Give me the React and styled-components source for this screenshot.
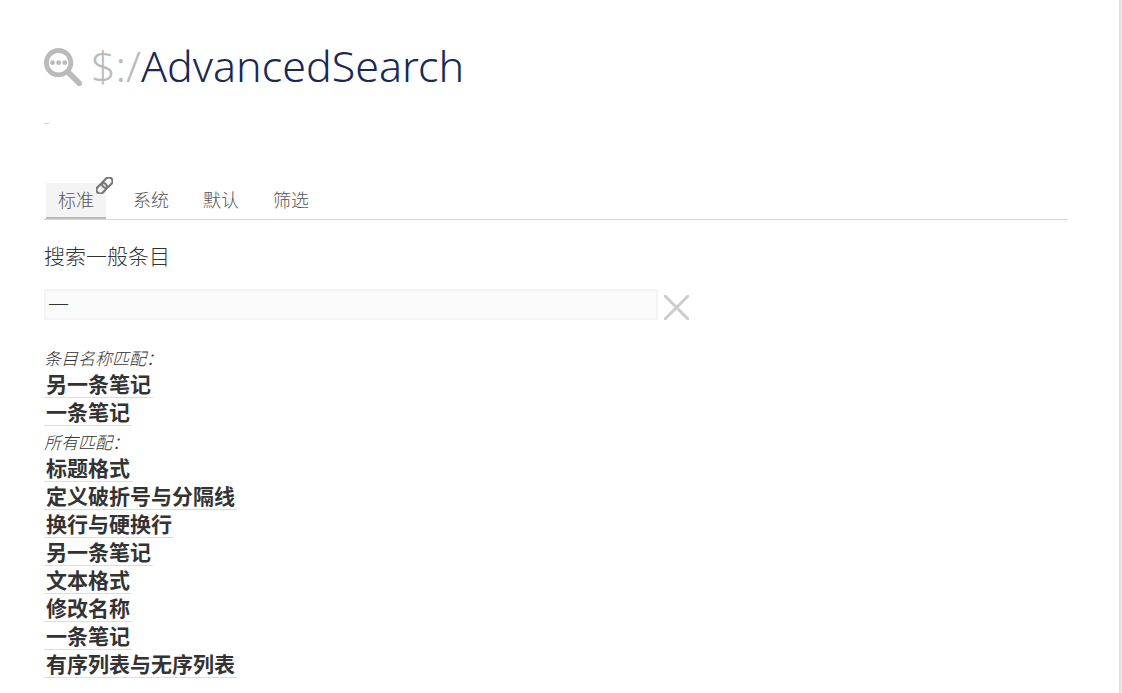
import React, { useState } from "react";
import styled, { createGlobalStyle } from "styled-components";

const GlobalStyle = createGlobalStyle`
  *, *::before, *::after { box-sizing: border-box; }
  body {
    margin: 0;
    background: #eeeeee;
    color: #333333;
    font-family: "Open Sans", "Noto Sans CJK SC", sans-serif;
  }
`;

const Frame = styled.main`
  min-height: 100vh;
  margin-right: 1px;
  padding: 36px 51px 14px 44px;
  border-right: 2px solid #e0e0e0;
  background: #ffffff;
`;

const Title = styled.h1`
  display: flex;
  align-items: center;
  gap: 8px;
  margin: 0;
  color: #182955;
  font-family: "Noto Sans", "Open Sans", sans-serif;
  font-size: 43px;
  font-weight: 300;
  line-height: 60px;
`;

const SearchIcon = styled.svg`
  flex: none;
  width: 39px;
  height: 39px;
  margin-top: 2px;
  fill: #bbbbbb;
`;

const Prefix = styled.span`
  color: #bbbbbb;
`;

const Subtitle = styled.div`
  height: 28px;
  margin-top: 12px;
  color: #d0d0d0;
  font-size: 12px;
  line-height: 20px;
`;

const TabBar = styled.div`
  display: flex;
  gap: 10px;
  margin-top: 47px;
  padding-left: 2px;
  border-bottom: 1px solid #d8d8d8;
`;

const Tab = styled.button`
  position: relative;
  height: 36px;
  margin-right: ${(p) => (p.$linked ? "5px" : "0")};
  padding: 0 12px;
  border: 0;
  border-bottom: 2px solid ${(p) => (p.$active ? "#bbbbbb" : "transparent")};
  background: ${(p) => (p.$active ? "#f4f4f4" : "transparent")};
  color: #555555;
  font-family: inherit;
  font-size: 18px;
  font-weight: 300;
  line-height: 34px;
  cursor: pointer;
`;

const LinkIcon = styled.svg`
  position: absolute;
  top: -6px;
  right: -7px;
  width: 17px;
  height: 17px;
  fill: none;
  stroke: #777777;
  stroke-width: 17;
`;

const SearchLabel = styled.label`
  display: block;
  margin: 21px 0 17px;
  font-size: 21px;
  font-weight: 300;
  line-height: 31px;
`;

const SearchRow = styled.div`
  display: flex;
  align-items: center;
  gap: 6px;
`;

const SearchInput = styled.input`
  width: 60%;
  height: 31px;
  padding: 0 2px 4px;
  border: 2px solid #f4f4f4;
  background: #fafafa;
  color: #333333;
  font-family: inherit;
  font-size: 21px;
  font-weight: 300;
  outline: 0;
`;

const ClearButton = styled.button`
  display: flex;
  padding: 5px 0 0;
  border: 0;
  background: transparent;
  cursor: pointer;

  svg {
    width: 25px;
    height: 25px;
    stroke: #cccccc;
    stroke-width: 3;
  }
`;

const Results = styled.section`
  margin-top: 24px;
`;

const GroupLabel = styled.h2`
  margin: 0;
  padding-top: 2px;
  font-size: 17px;
  font-style: italic;
  font-weight: 300;
  line-height: 26px;
`;

const ResultList = styled.ul`
  margin: 0;
  padding: 0;
  list-style: none;
`;

const ResultItem = styled.li`
  display: flex;
  height: 28px;
`;

const ResultLink = styled.a`
  height: 26px;
  padding: 0 2px;
  border-bottom: 1px solid #dddddd;
  color: #333333;
  font-size: 21px;
  font-weight: 700;
  line-height: 24px;
  text-decoration: none;
`;

const tabs = ["标准", "系统", "默认", "筛选"];

const groups = [
  { label: "条目名称匹配：", items: ["另一条笔记", "一条笔记"] },
  {
    label: "所有匹配：",
    items: [
      "标题格式",
      "定义破折号与分隔线",
      "换行与硬换行",
      "另一条笔记",
      "文本格式",
      "修改名称",
      "一条笔记",
      "有序列表与无序列表",
    ],
  },
];

export default function App() {
  const [active, setActive] = useState(0);
  const [query, setQuery] = useState("一");

  return (
    <>
      <GlobalStyle />
      <Frame>
        <Title>
          <SearchIcon viewBox="0 0 128 128" aria-hidden="true">
            <path
              fillRule="evenodd"
              d="M74.565 87.985A47.776 47.776 0 0 1 48 96C21.49 96 0 74.51 0 48S21.49 0 48 0s48 21.49 48 48c0 9.854-2.97 19.015-8.062 26.635l34.347 34.347a9.443 9.443 0 0 1 0 13.36 9.446 9.446 0 0 1-13.36 0zM48 80c17.673 0 32-14.327 32-32S65.673 16 48 16 16 30.327 16 48s14.327 32 32 32z"
            />
            <circle cx="28" cy="48" r="8" />
            <circle cx="48" cy="48" r="8" />
            <circle cx="68" cy="48" r="8" />
          </SearchIcon>
          <span>
            <Prefix>$:/</Prefix>AdvancedSearch
          </span>
        </Title>
        <Subtitle>_</Subtitle>

        <TabBar role="tablist">
          {tabs.map((name, i) => (
            <Tab
              key={name}
              type="button"
              role="tab"
              aria-selected={i === active}
              $active={i === active}
              $linked={i === 0}
              onClick={() => setActive(i)}
            >
              {name}
              {i === 0 && (
                <LinkIcon viewBox="0 0 128 128" aria-hidden="true">
                  <g transform="rotate(-45 64 64)">
                    <rect x="-10" y="36" width="88" height="56" rx="28" />
                    <rect x="50" y="36" width="88" height="56" rx="28" />
                  </g>
                </LinkIcon>
              )}
            </Tab>
          ))}
        </TabBar>

        <SearchLabel htmlFor="search">搜索一般条目</SearchLabel>
        <SearchRow>
          <SearchInput
            id="search"
            type="text"
            value={query}
            onChange={(e) => setQuery(e.target.value)}
          />
          <ClearButton type="button" aria-label="清除" onClick={() => setQuery("")}>
            <svg viewBox="0 0 25 25" aria-hidden="true">
              <path d="M0 0L25 25M25 0L0 25" />
            </svg>
          </ClearButton>
        </SearchRow>

        <Results>
          {groups.map((group) => (
            <React.Fragment key={group.label}>
              <GroupLabel>{group.label}</GroupLabel>
              <ResultList>
                {group.items.map((item) => (
                  <ResultItem key={item}>
                    <ResultLink href={"#" + item}>{item}</ResultLink>
                  </ResultItem>
                ))}
              </ResultList>
            </React.Fragment>
          ))}
        </Results>
      </Frame>
    </>
  );
}
